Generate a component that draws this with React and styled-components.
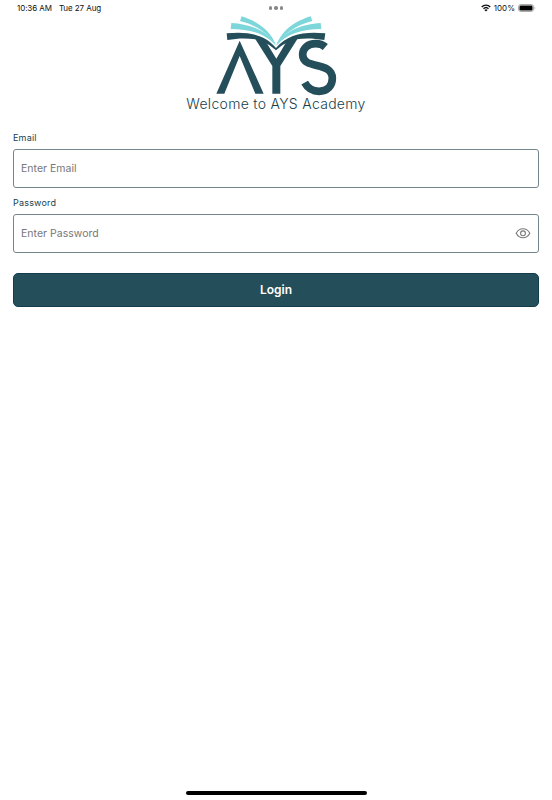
import styled, { createGlobalStyle } from "styled-components";

const PRIMARY = "#254e5b";
const ACCENT = "#7dd6da";

function App() {
  return (
    <>
      <GlobalStyle />
      <Screen>
        <StatusBar>
          <Clock>
            <span>10:36 AM</span>
            <span>Tue 27 Aug</span>
          </Clock>
          <Dots>
            <Dot />
            <Dot />
            <Dot />
          </Dots>
          <Indicators>
            <WifiIcon />
            <span>100%</span>
            <BatteryIcon />
          </Indicators>
        </StatusBar>
        <Logo />
        <Title>Welcome to AYS Academy</Title>
        <Form onSubmit={(e) => e.preventDefault()}>
          <Label htmlFor="email">Email</Label>
          <Field>
            <Input id="email" type="email" placeholder="Enter Email" />
          </Field>
          <Label htmlFor="password">Password</Label>
          <Field>
            <Input id="password" type="password" placeholder="Enter Password" />
            <EyeIcon />
          </Field>
          <LoginButton type="submit">Login</LoginButton>
        </Form>
        <HomeIndicator />
      </Screen>
    </>
  );
}

export default App;

function Logo() {
  return (
    <LogoSvg viewBox="30 15 372 243" aria-label="AYS">
      {/* pages */}
      <g fill={ACCENT}>
        <path d="M110 19 C151 32 196 57 213 106 C190 70 153 45 105 33 Z" />
        <path d="M79 39 C135 42 193 63 213 108 C184 72 136 57 77 57 Z" />
        <path d="M317 19 C276 32 231 57 214 106 C237 70 274 45 322 33 Z" />
        <path d="M347 39 C292 42 234 63 214 108 C243 72 291 57 349 57 Z" />
      </g>
      <g fill={PRIMARY}>
        {/* cover */}
        <path d="M65 70 C125 64 178 71 213 114 C249 71 301 64 361 70 L358 90 C325 84 297 84 275 88 C248 94 230 106 213 121 C196 106 177 94 151 88 C126 84 99 84 67 90 Z" />
        {/* letters */}
        <path d="M104 92 L176 251 L151 251 L104 138 L58 251 L34 251 Z" />
        <path d="M149 84 L180 91 L214 146 L247 91 L279 84 L226 168 L226 251 L202 251 L202 168 Z" />
      </g>
      <path
        d="M361 111 C353 104 344 101 332 101 C308 101 293 116 293 134 C293 180 382 152 382 205 C382 229 366 244 342 244 C321 244 309 236 299 218"
        fill="none"
        stroke={PRIMARY}
        strokeWidth="23"
      />
    </LogoSvg>
  );
}

function WifiIcon() {
  return (
    <svg width="10" height="8" viewBox="0 0 20 16">
      <g fill="none" stroke="#111" strokeWidth="2.8">
        <path d="M1.5 6 C6 1 14 1 18.5 6" />
        <path d="M5 9.5 C8 6.5 12 6.5 15 9.5" />
      </g>
      <path d="M10 15 L6.8 11.8 C8.5 10.2 11.5 10.2 13.2 11.8 Z" fill="#111" />
    </svg>
  );
}

function BatteryIcon() {
  return (
    <svg width="18" height="8" viewBox="0 0 18 8">
      <rect x="0.5" y="0.5" width="15" height="7" rx="2.3" fill="#fff" stroke="#aaa" />
      <rect x="1.5" y="1.5" width="13" height="5" rx="1.2" fill="#000" />
      <path d="M16.5 2.8 C17.6 3.2 17.6 4.8 16.5 5.2 Z" fill="#aaa" />
    </svg>
  );
}

function EyeIcon() {
  return (
    <svg width="16" height="13" viewBox="0 0 16 13" fill="none" stroke="#777" strokeWidth="1.1">
      <path d="M1.2 6.3 C4.3 0.3 11.700 0.3 14.800 6.3 C11.700 12.300 4.300 12.300 1.200 6.3 Z" />
      <circle cx="8" cy="6.3" r="2.4" />
    </svg>
  );
}

const GlobalStyle = createGlobalStyle`
  * {
    box-sizing: border-box;
  }
  body {
    margin: 0;
    background: #fff;
    font-family: Inter, "Liberation Sans", sans-serif;
  }
`;

const Screen = styled.div`
  height: 800px;
  display: flex;
  flex-direction: column;
`;

const StatusBar = styled.div`
  height: 15px;
  padding: 1px 16px 0;
  display: grid;
  grid-template-columns: 1fr auto 1fr;
  align-items: center;
  font-size: 8px;
  line-height: 14px;
  color: #111;
`;

const Clock = styled.div`
  display: flex;
  gap: 7px;
  letter-spacing: -0.08px;
  padding-left: 1px;
`;

const Dots = styled.div`
  display: flex;
  gap: 2px;
`;

const Dot = styled.i`
  width: 3.5px;
  height: 3.5px;
  border-radius: 50%;
  background: #888;
`;

const Indicators = styled.div`
  display: flex;
  align-items: center;
  justify-content: flex-end;
  gap: 3px;
`;

const LogoSvg = styled.svg`
  width: 124px;
  height: 81px;
  margin-left: 215px;
`;

const Title = styled.h1`
  margin: -1px 0 1px;
  font-size: 14px;
  font-weight: 300;
  line-height: 17px;
  letter-spacing: 0.3px;
  text-align: center;
  color: #173f4d;
`;

const Form = styled.form`
  padding: 17px 13px 0;
  display: flex;
  flex-direction: column;
`;

const Label = styled.label`
  height: 19px;
  font-size: 9px;
  line-height: 16px;
  letter-spacing: 0.2px;
  color: #173f4d;
`;

const Field = styled.div`
  height: 39px;
  margin-bottom: 7px;
  padding: 0 7px;
  display: flex;
  align-items: center;
  border: 1px solid #75878e;
  border-radius: 3px;
`;

const Input = styled.input`
  flex: 1;
  padding: 0;
  border: 0;
  outline: 0;
  background: none;
  font-family: inherit;
  font-size: 10.5px;
  letter-spacing: 0.02px;
  color: ${PRIMARY};

  &::placeholder {
    color: #777;
  }
`;

const LoginButton = styled.button`
  height: 34px;
  margin-top: 13px;
  padding: 0 0 2px;
  border: 1px solid #113d4c;
  border-radius: 5px;
  background: ${PRIMARY};
  font-family: inherit;
  font-size: 12px;
  font-weight: 600;
  color: #fff;
`;

const HomeIndicator = styled.div`
  width: 181px;
  height: 4px;
  margin: auto auto 5px;
  border-radius: 2px;
  background: #000;
`;
